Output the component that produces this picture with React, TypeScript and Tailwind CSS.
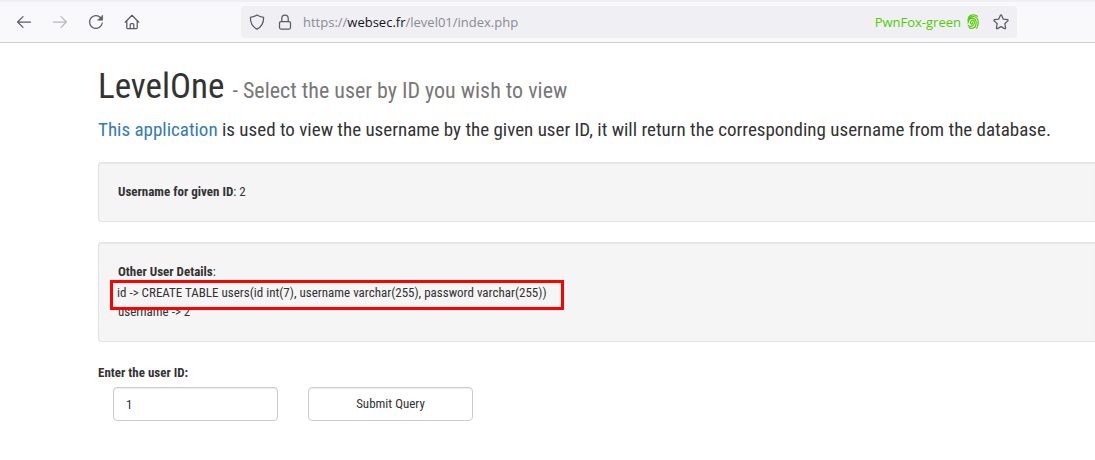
import type { ReactNode } from "react";

const iconProps = {
  viewBox: "0 0 16 16",
  fill: "none",
  stroke: "currentColor",
  strokeWidth: 1.25,
  strokeLinecap: "round" as const,
  strokeLinejoin: "round" as const,
  className: "size-4",
};

function ToolButton({ label, disabled, children }: { label: string; disabled?: boolean; children: ReactNode }) {
  return (
    <button type="button" aria-label={label} disabled={disabled} className="flex size-4 items-center justify-center disabled:opacity-40">
      {children}
    </button>
  );
}

function Toolbar() {
  return (
    <header className="flex h-[43px] items-center border-b border-t-2 border-b-[#cccccc] border-t-[#f0f0f4] bg-[#f9f9fb] pl-4 pr-[78px] text-[#5b5b66]">
      <nav className="flex w-[225px] shrink-0 items-center gap-5">
        <ToolButton label="Back">
          <svg {...iconProps}><path d="M14.500 8H1.800M7 2.600 1.600 8 7 13.400" /></svg>
        </ToolButton>
        <ToolButton label="Forward" disabled>
          <svg {...iconProps}><path d="M1.500 8h12.700M9 2.600 14.400 8 9 13.400" /></svg>
        </ToolButton>
        <ToolButton label="Reload">
          <svg {...iconProps}>
            <path d="M14.300 9A6.400 6.400 0 1 1 12.600 3.600" />
            <path d="M14.600 1.400v4.800H9.800z" fill="currentColor" strokeWidth="0.6" />
          </svg>
        </ToolButton>
        <ToolButton label="Home">
          <svg {...iconProps}>
            <path d="M1.200 8.200 8 1.300l6.800 6.900M2.800 7v6.400c0 .8.5 1.300 1.300 1.300h7.800c.8 0 1.300-.5 1.300-1.300V7M6.200 14.500v-4c0-.6.4-1 1-1h1.600c.6 0 1 .4 1 1v4" />
          </svg>
        </ToolButton>
      </nav>
      <div className="flex h-8 flex-1 items-center rounded bg-[#f0f0f4] px-2 font-['Open_Sans','Noto_Sans',sans-serif] text-[13px]">
        <svg {...iconProps} aria-hidden="true">
          <path d="M8 .9c2 1.300 4 2 6.600 2.500.1 5.500-1.700 9.300-6.600 11.700C3.100 12.700 1.300 8.900 1.400 3.400 4 2.900 6 2.200 8 .9z" />
        </svg>
        <svg {...iconProps} aria-hidden="true" className="ml-3 size-4">
          <rect x="2.500" y="7.500" width="11" height="7.500" rx="1.500" />
          <path d="M4.800 7.500V4.200a3.200 3.200 0 0 1 6.400 0v3.300" />
        </svg>
        <p className="ml-[10px] flex-1 pt-[2px] text-[#8a8a93]">
          https://<span className="text-[#15141a]">websec.fr</span>/level01/index.php
        </p>
        <span className="pt-[2px] text-[#51cd00]">PwnFox-green</span>
        <svg viewBox="0 0 16 16" fill="none" stroke="#51cd00" strokeWidth="1.200" strokeLinecap="round" className="ml-1 size-4" aria-hidden="true">
          <path d="M3.500 3C5.500.3 10 .3 12.500 2.300M2.800 6.300C4 1.800 10 1.500 12.200 4.500c1.200 1.800 1.200 5 .3 7.500M3 9c.2-4.500 4-5.700 6.300-4.200 2.500 1.700 2 5.700.6 8.700M3.300 11.300C4.500 13 7.500 12.800 8.800 10.500c1-2 .6-4.300-1.100-4.300-1.800 0-2.700 2.300-1.800 3.500.6.700 1.600.2 1.600-1.200M4.300 13.700c1.500 1 3.500.8 5-.300M11.700 14.200 12.300 13" />
        </svg>
        <button type="button" aria-label="Bookmark this page" className="ml-3">
          <svg {...iconProps}>
            <path d="M7.400 1.300c.3-.6.900-.6 1.200 0l1.700 3.900 4.100.5c.7.100.9.800.4 1.200l-3 2.800.8 4.200c.1.700-.4 1-1 .7L8 12.600l-3.600 2c-.6.300-1.100 0-1-.7l.8-4.200-3-2.800c-.5-.4-.3-1.100.4-1.200l4.100-.5z" />
          </svg>
        </button>
      </div>
    </header>
  );
}

function Well({ children }: { children: ReactNode }) {
  return (
    <section className="mb-5 rounded-l border border-r-0 border-[#e3e3e3] bg-[#f5f5f5] p-[19px] shadow-[inset_0_1px_1px_rgba(0,0,0,0.05)]">
      {children}
    </section>
  );
}

export default function App() {
  return (
    <div className="min-h-screen bg-white">
      <Toolbar />
      <main className="pl-[98px] pt-6 font-['Roboto_Condensed','Liberation_Sans',sans-serif] text-[13px]/5 text-[#333333]">
        <h1 className="text-[35px]/[40px] font-normal">
          LevelOne <small className="text-[22px]/[24px] font-normal text-[#777777]">- Select the user by ID you wish to view</small>
        </h1>
        <p className="mb-[18px] mt-2 text-[19px]/[29px]">
          <a href="#source" className="text-[#337ab7]">This application</a> is used to view the username by the given user ID, it will return the corresponding username from the database.
        </p>
        <Well>
          <p><b>Username for given ID</b>: 2</p>
        </Well>
        <Well>
          <p><b>Other User Details</b>:</p>
          <div className="relative h-5">
            <p className="absolute -left-2 -top-[2px] w-[454px] whitespace-nowrap border-3 border-[#ff0000] bg-[#f5f5f5] px-1 pb-1">
              id -&gt; CREATE TABLE users(id int(7), username varchar(255), password varchar(255))
            </p>
          </div>
          <p>username -&gt; 2</p>
        </Well>
        <form className="pt-px" onSubmit={(event) => event.preventDefault()}>
          <label htmlFor="user-id" className="font-bold">Enter the user ID:</label>
          <div className="mt-1 flex gap-[30px] pl-[15px]">
            <input
              id="user-id"
              type="text"
              defaultValue="1"
              className="h-[34px] w-[165px] rounded border border-[#cccccc] bg-white px-3 shadow-[inset_0_1px_1px_rgba(0,0,0,0.075)]"
            />
            <button
              type="submit"
              className="h-[34px] w-[165px] rounded border border-[#cccccc] bg-white shadow-[inset_0_1px_1px_rgba(0,0,0,0.075)]"
            >
              Submit Query
            </button>
          </div>
        </form>
      </main>
    </div>
  );
}
